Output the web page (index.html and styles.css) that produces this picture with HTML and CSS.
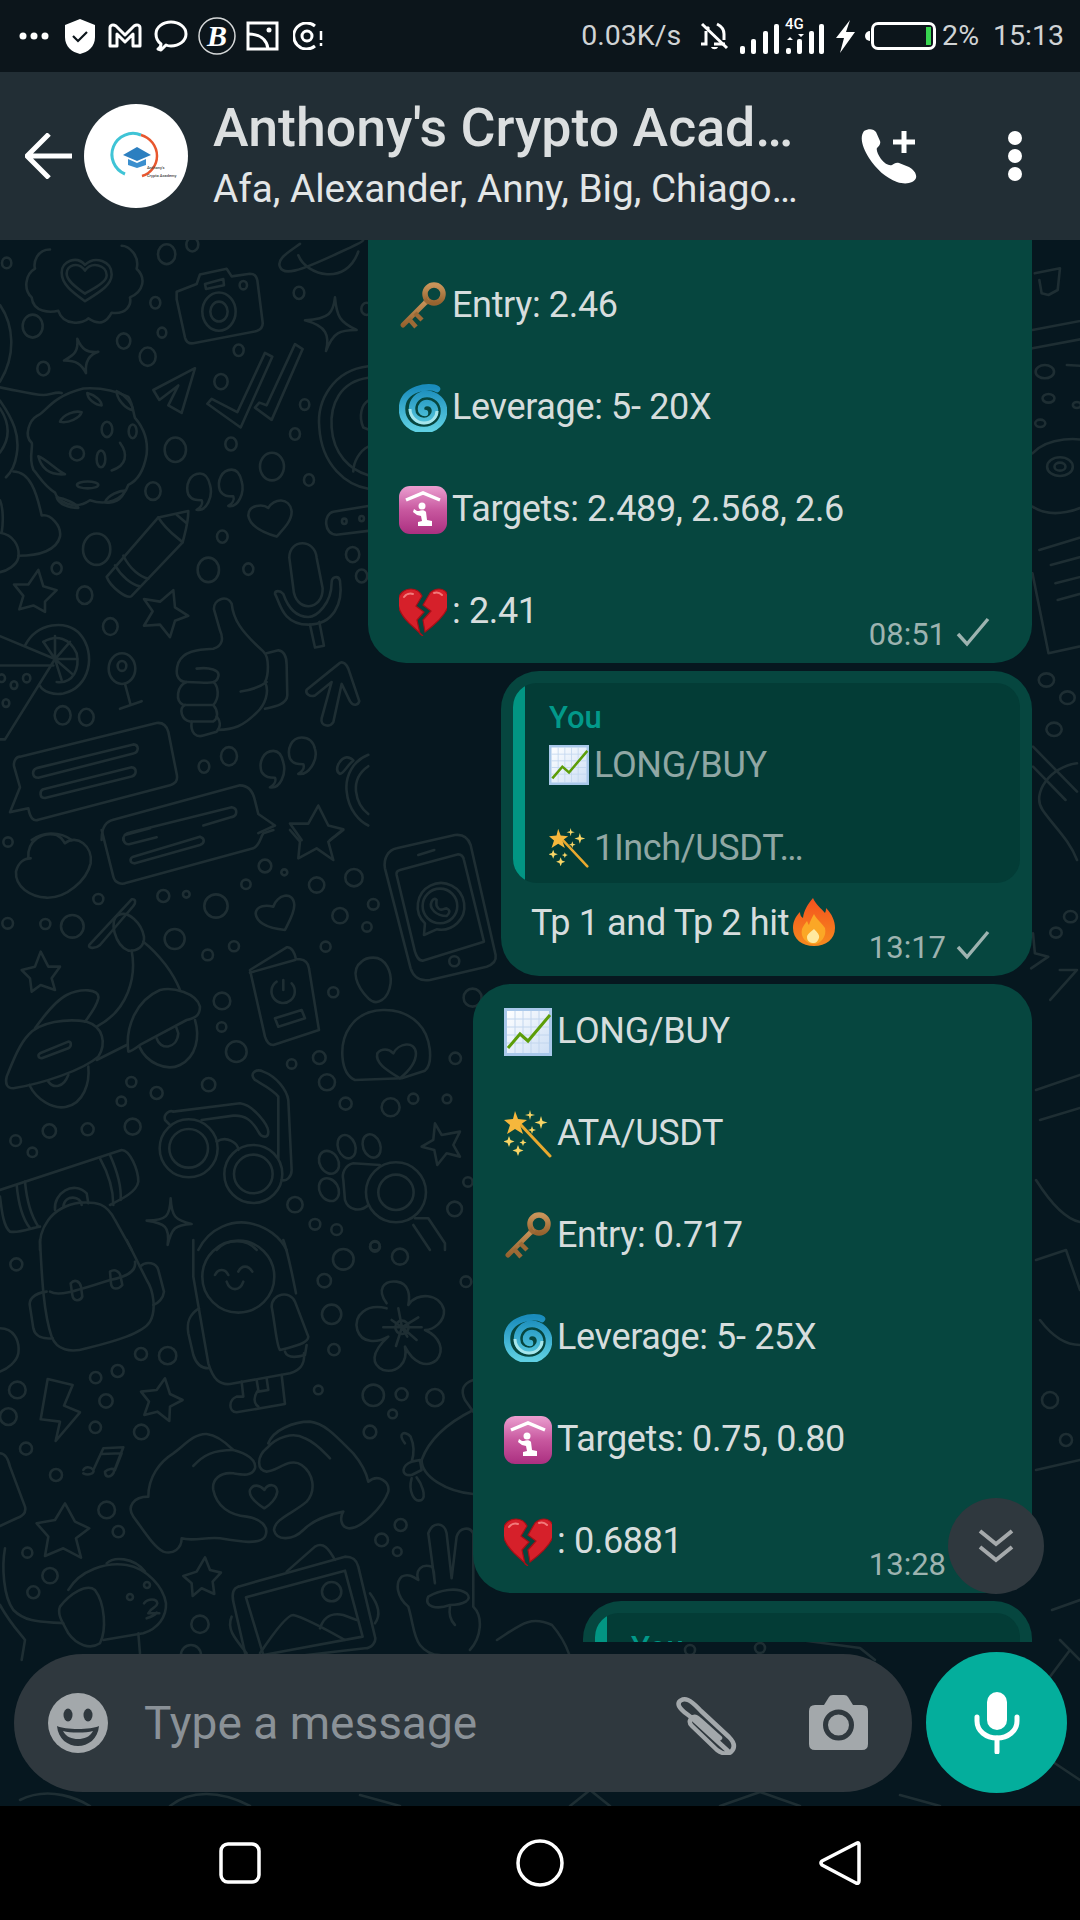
FILE: index.html
```html
<!DOCTYPE html>
<html lang="en">
<head>
<meta charset="utf-8">
<title>Anthony's Crypto Academy</title>
<link rel="stylesheet" href="styles.css">
</head>
<body>
<svg class="defs" width="0" height="0" aria-hidden="true">
  <defs>
    <linearGradient id="gWorship" x1="0" y1="0" x2="0" y2="1"><stop offset="0" stop-color="#eb9fd0"/><stop offset=".5" stop-color="#c8589f"/><stop offset="1" stop-color="#ab2f80"/></linearGradient>
    <linearGradient id="gSpiral" x1="0" y1="0" x2="0" y2="1"><stop offset="0" stop-color="#1a8cbc"/><stop offset="1" stop-color="#5fd0e2"/></linearGradient>
    <linearGradient id="gFire" x1="0" y1="0" x2="0" y2="1"><stop offset="0" stop-color="#f4511e"/><stop offset="1" stop-color="#f68a1e"/></linearGradient>
    <linearGradient id="gChart" x1="0" y1="0" x2="1" y2="1"><stop offset="0" stop-color="#fdfeff"/><stop offset="1" stop-color="#cfe0f5"/></linearGradient>
    <linearGradient id="gKey" x1="0" y1="0" x2="0" y2="1"><stop offset="0" stop-color="#c8945a"/><stop offset="1" stop-color="#96632f"/></linearGradient>
    <symbol id="e-key" viewBox="0 0 48 48">
      <circle cx="35" cy="12" r="9" fill="none" stroke="url(#gKey)" stroke-width="5.500"/>
      <path d="M28 19 4 43" fill="none" stroke="url(#gKey)" stroke-width="5" stroke-linecap="round"/>
      <path d="M10 37l7 8M16 31l7 7M26 17l4 4" fill="none" stroke="#9c6a36" stroke-width="4.500"/>
    </symbol>
    <symbol id="e-cyclone" viewBox="0 0 48 48">
      <path d="M38 5C32 1 3 3 3 25 3 38 13 46 25 46 37 46 45 37 45 27 45 17 37 10 28 10 19 10 13 17 13 25 13 32 18 37 25 37 31 37 36 32 36 27 36 22 32 19 28 19 24 19 22 22 22 25 22 28 24 29 26 29" fill="none" stroke="url(#gSpiral)" stroke-width="6.500" stroke-linecap="round"/>
      <path d="M11 25C11 33 18 39 25 39 33 39 38 33 38 27" fill="none" stroke="#a6e6ec" stroke-width="3"/>
    </symbol>
    <symbol id="e-worship" viewBox="0 0 48 48">
      <rect x="0" y="0" width="48" height="48" rx="11" fill="url(#gWorship)"/>
      <path d="M7 14 24 7 41 14" fill="none" stroke="#fff" stroke-width="3.500"/>
      <circle cx="23" cy="20" r="3.500" fill="#fff"/>
      <path d="M20 25c2-1 6-1 7 1l1 8 5 1v5H19v-4l4-1-1-5-4-1-4-3 1-3 3 2z" fill="#fff"/>
    </symbol>
    <symbol id="e-heart" viewBox="0 0 48 48">
      <path d="M24 48 10 35C3 28-1 21-1 14-1 6 5 1 12 1c5 0 9 3 11 7l-6 10 8 6-7 8 3 14zM26 44l-2-12 8-9-8-6 7-12c2-2 6-4 9-4 6 0 10 5 10 12 0 11-12 22-24 31z" fill="#d6202a" stroke="#a80e16" stroke-width="1.200"/>
      <path d="M5 9c2-3 6-4 9-3" fill="none" stroke="#f27a7a" stroke-width="2" stroke-linecap="round"/>
      <path d="M35 5c3-1 6 0 8 2" fill="none" stroke="#f27a7a" stroke-width="2" stroke-linecap="round"/>
    </symbol>
    <symbol id="e-chart" viewBox="0 0 48 48">
      <rect x="0" y="0" width="48" height="48" fill="#a9c8ea"/>
      <rect x="3" y="3" width="42" height="42" fill="url(#gChart)"/>
      <path d="M3 11h42M3 19h42M3 27h42M3 35h42M11 3v42M19 3v42M27 3v42M35 3v42" stroke="#c2d6ee" stroke-width="1"/>
      <path d="M4 40 16 26l8 7L46 7" fill="none" stroke="#5c9d08" stroke-width="3"/>
    </symbol>
    <symbol id="e-wand" viewBox="0 0 48 48">
      <path d="M16 14 46 46" stroke="#e9a92e" stroke-width="3" stroke-linecap="round"/>
      <path d="M11 1l3 8 9 1-7 5 3 9-8-5-8 5 3-9-6-5 9-1z" fill="#f6b73c"/>
      <path d="M26 0l1 4 4 1-4 1-1 4-1-4-4-1 4-1zM37 6l1.500 5 5 1.500-5 1.500-1.500 5-1.500-5-5-1.500 5-1.500zM28 16l1 3 3 1-3 1-1 3-1-3-3-1 3-1zM5 26l1.500 4 4 1.500-4 1.500L5 37l-1.500-4-4-1.500 4-1.500zM14 35l1.500 4 4 1.500-4 1.500-1.500 4-1.500-4-4-1.500 4-1.500zM19 29l1 2.500 2.500 1-2.500 1-1 2.500-1-2.500-2.500-1 2.500-1z" fill="#f8d566"/>
    </symbol>
    <symbol id="e-fire" viewBox="0 0 42 48">
      <path d="M20 0c3 7 8 10 12 15 1-2 1-4 1-5 6 6 9 13 9 20 0 11-9 18-21 18S0 41 0 30c0-7 3-12 7-16 0 3 1 5 3 6 1-8 5-14 10-20z" fill="url(#gFire)"/>
      <path d="M21 16c2 5 8 9 11 14 2 8-4 16-11 16-8 0-14-7-12-15 1-3 3-5 5-8 1 2 1 3 2 4 1-4 3-7 5-11z" fill="#fba726"/>
      <path d="M21 31c3 3 6 6 5 9-1 3-3 5-5 5-4 0-7-2-7-6 0-3 4-5 7-8z" fill="#ffe9a0"/>
    </symbol>
    <symbol id="i-check" viewBox="0 0 34 30">
      <path d="M2 17 11 27 32 2" fill="none" stroke="currentColor" stroke-width="3.400"/>
    </symbol>
  </defs>
</svg>

<div class="phone">
  <header class="statusbar">
    <div class="status-left">
      <svg class="st-dots" width="33" height="8" viewBox="0 0 33 8"><circle cx="4" cy="4" r="3.500"/><circle cx="15" cy="4" r="3.500"/><circle cx="26" cy="4" r="3.500"/></svg>
      <svg class="st-icon" width="32" height="35" viewBox="0 0 32 35"><path d="M16 0 31 6V18C31 28 24 33 16 35 8 33 1 28 1 18V6Z" fill="#fff"/><path d="M9 17l5 5 9-9" fill="none" stroke="#0c151b" stroke-width="2.200"/></svg>
      <svg class="st-icon" width="34" height="26" viewBox="0 0 34 26"><path d="M2 23V5C2 2 5 1 8 3L17 12 26 3C29 1 32 2 32 5V23H25V11L17 19 9 11V23Z" fill="none" stroke="#fff" stroke-width="3" stroke-linejoin="round"/></svg>
      <svg class="st-icon st-chat" width="34" height="32" viewBox="0 0 34 32"><path d="M7 24C3 21 2 18 2 14 2 7 9 2 17 2S32 7 32 14 25 26 17 26C15 26 14 26 12 25L7 30 4 29C6 28 7 26 7 24Z" fill="none" stroke="#fff" stroke-width="3" stroke-linejoin="round"/></svg>
      <svg class="st-icon st-brand" width="38" height="38" viewBox="0 0 38 38"><circle cx="19" cy="19" r="18" fill="none" stroke="#d5d7d8" stroke-width="1.500"/><text x="19" y="29" text-anchor="middle" class="st-b">B</text></svg>
      <svg class="st-icon st-image" width="33" height="30" viewBox="0 0 33 30"><rect x="2" y="2" width="29" height="26" fill="none" stroke="#fff" stroke-width="3"/><path d="M2 13C13 13 21 18 22 28" fill="none" stroke="#fff" stroke-width="3"/><circle cx="23" cy="9" r="2.500" fill="#fff"/></svg>
      <svg class="st-icon" width="30" height="28" viewBox="0 0 30 28"><path d="M22 4A13 13 0 1 0 22 24" fill="none" stroke="#fff" stroke-width="3"/><circle cx="14" cy="14" r="5" fill="none" stroke="#fff" stroke-width="3"/><path d="M28 9v9M28 21v3" stroke="#fff" stroke-width="2.500"/></svg>
    </div>
    <div class="status-right">
      <span class="st-text">0.03K/s</span>
      <svg class="st-bell" width="29" height="30" viewBox="0 0 29 30"><path d="M2 3 27 27" stroke="#fff" stroke-width="3"/><path d="M6 10V23H1M14 23H25M24 19V13C24 8 21 5 17 3M7 8 9 6" fill="none" stroke="#fff" stroke-width="3"/><path d="M11 26c1 3 6 3 7 0z" fill="#fff"/></svg>
      <svg class="st-signal" width="85" height="38" viewBox="0 0 85 38"><g fill="#fff"><rect x="0" y="30" width="5" height="8" rx="2"/><rect x="11" y="23" width="5" height="15" rx="2"/><rect x="23" y="15" width="5" height="23" rx="2"/><rect x="34" y="8" width="5" height="30" rx="2"/><rect x="46" y="32" width="5" height="6" rx="2"/><rect x="57" y="23" width="5" height="15" rx="2"/><rect x="69" y="15" width="5" height="23" rx="2"/><rect x="79" y="8" width="5" height="30" rx="2"/><path d="M47 24l3-3 3 3zM58 18l3 3 3-3z"/></g><text x="45" y="13" class="st-4g">4G</text></svg>
      <svg class="st-bolt" width="19" height="33" viewBox="0 0 19 33"><path d="M14 0 0 18H8L4 33 19 12H10Z" fill="#fff"/></svg>
      <div class="battery"><span class="battery-level"></span></div>
      <span class="st-text st-pct">2%</span>
      <span class="st-text st-time">15:13</span>
    </div>
  </header>

  <header class="appbar">
    <svg class="back" width="47" height="46" viewBox="0 0 47 46"><path d="M47 23H3M24 1 2 23 24 45" fill="none" stroke="#fff" stroke-width="5"/></svg>
    <div class="avatar">
      <svg width="104" height="104" viewBox="0 0 104 104"><path d="M41 70A21 21 0 0 1 57 31" fill="none" stroke="#3fc4d6" stroke-width="3"/><path d="M57 31A22 22 0 0 1 73 52 21 21 0 0 1 58 72" fill="none" stroke="#e8572e" stroke-width="2.500"/><path d="M39 51 53 43 67 51 53 57Z" fill="#2c7fc0"/><path d="M44 55V61L53 64 62 61V55L53 59Z" fill="#3b8fce"/><text x="63" y="65" class="logo-text">Anthony's</text><text x="63" y="73" class="logo-text">Crypto Academy</text></svg>
    </div>
    <div class="title-block">
      <div class="title">Anthony's Crypto Acad…</div>
      <div class="subtitle">Afa, Alexander, Anny, Big, Chiago…</div>
    </div>
    <svg class="add-call" width="56" height="56" viewBox="0 0 56 56"><path d="M3 3C8 0 13 1 15 4L19 13C20 16 18 18 16 20 15 22 17 27 20 31 24 36 28 38 31 37 33 36 35 34 38 35L48 39C53 42 56 46 55 50 53 55 45 57 36 54 25 50 15 41 8 30 2 20-2 10 3 3Z" fill="#fff"/><path d="M43 3V25M32 14H54" stroke="#fff" stroke-width="5"/></svg>
    <svg class="menu" width="16" height="50" viewBox="0 0 16 50"><circle cx="8" cy="7" r="7"/><circle cx="8" cy="25" r="7"/><circle cx="8" cy="43" r="7"/></svg>
  </header>

  <main class="chat">
    <svg class="wall" width="1080" height="1566" viewBox="0 240 1080 1566" aria-hidden="true">
      <g transform="translate(0 240) scale(.3333 .3827)">
        <circle cx="20" cy="60" r="14"/><circle cx="500" cy="37" r="26"/><circle cx="577" cy="12" r="18"/><circle cx="466" cy="164" r="15"/><circle cx="98" cy="225" r="30"/><circle cx="371" cy="264" r="20"/><circle cx="486" cy="242" r="13"/><circle cx="443" cy="305" r="24"/><circle cx="130" cy="336" r="18"/><circle cx="716" cy="288" r="15"/><circle cx="663" cy="370" r="20"/><circle cx="897" cy="138" r="16"/><circle cx="914" cy="430" r="14"/><circle cx="885" cy="507" r="15"/><circle cx="693" cy="533" r="17"/><circle cx="526" cy="548" r="32"/><circle cx="816" cy="592" r="36"/><circle cx="459" cy="656" r="23"/><circle cx="927" cy="627" r="15"/><circle cx="667" cy="775" r="16"/><circle cx="290" cy="808" r="41"/><circle cx="625" cy="862" r="32"/><circle cx="745" cy="860" r="15"/><circle cx="170" cy="858" r="15"/><circle cx="254" cy="928" r="23"/><circle cx="331" cy="1010" r="22"/><circle cx="1058" cy="822" r="20"/><circle cx="1085" cy="878" r="17"/><circle cx="188" cy="1242" r="24"/><circle cx="259" cy="1247" r="22"/><circle cx="612" cy="1376" r="16"/><circle cx="687" cy="1349" r="24"/><circle cx="1100" cy="180" r="16"/>
        <path d="M150 25C110 25 100 60 105 75 75 90 70 130 95 150 100 190 150 190 175 185 190 225 250 220 265 205 300 225 320 215 335 190 380 195 395 170 390 150 430 135 440 100 410 75 420 40 385 15 365 15"/>
        <path d="M255 160C215 135 185 115 185 85 185 55 230 40 255 65 285 40 335 55 335 90 335 120 290 140 255 160Z"/><path d="M255 140C225 122 200 105 200 88 200 65 235 55 255 80 275 55 320 65 320 92 320 110 285 125 255 140Z"/>
        <path d="M530 135 590 115 600 90 680 75 695 95 750 88Q768 88 772 105L788 215Q790 232 770 238L580 270Q560 272 555 255L530 155Z"/><circle cx="657" cy="187" r="50"/><circle cx="657" cy="187" r="26"/><path d="M615 115 670 102 672 118 618 128Z"/><circle cx="730" cy="118" r="11"/>
        <path d="M900 10C860 35 830 50 840 70 850 95 900 80 1000 40 1050 20 1090 5 1090 0"/><path d="M895 40C920 95 1040 120 1075 30"/>
        <path d="M1005 150C1000 190 990 205 915 210 980 225 990 250 978 290 1000 240 1020 235 1070 235 1020 215 1010 200 1005 150Z"/>
        <path d="M232 258C235 290 225 300 192 315 230 315 245 325 258 348 255 320 265 300 295 292 260 295 245 285 232 258Z"/>
        <path d="M585 335 460 392 478 418 535 380 505 432 545 452Z"/>
        <path d="M622 428 635 415 712 450 795 295 817 305 722 490Z"/><path d="M765 438 778 425 800 432 885 272 908 285 815 470Z"/>
        <path d="M110 460C140 450 150 410 250 388 300 385 350 395 385 410 400 430 400 455 405 465 430 490 445 520 440 560 430 610 410 630 385 640 370 680 320 695 270 680 220 710 170 680 165 660 130 640 120 620 100 600 85 570 100 540 95 530 70 510 90 470 110 460Z"/>
        <path d="M180 475C190 455 225 445 245 450 240 465 205 480 180 475Z"/><path d="M262 400C285 405 305 420 305 432 285 432 262 415 262 400Z"/><path d="M350 395C375 405 400 430 398 445 375 440 350 415 350 395Z"/><ellipse cx="321" cy="495" rx="16" ry="20"/><ellipse cx="398" cy="500" rx="12" ry="18"/><ellipse cx="231" cy="558" rx="21" ry="18"/><ellipse cx="303" cy="572" rx="13" ry="22"/><path d="M360 530C385 560 380 590 335 602"/><path d="M115 565C135 570 175 605 195 612 150 615 125 600 115 565Z"/><ellipse cx="263" cy="640" rx="32" ry="9"/><path d="M170 672C195 675 230 690 235 700 205 700 175 690 170 672Z"/><path d="M315 685C325 665 360 655 375 655 365 680 340 690 315 685Z"/>
        <path d="M0 385C60 395 100 405 130 405 150 405 170 395 185 400"/><path d="M0 420C40 470 60 510 50 560 45 590 30 610 18 620"/><path d="M40 605C90 605 110 660 125 720 150 715 185 745 180 775 170 810 120 825 55 825"/><path d="M0 765C40 770 60 800 55 830 50 850 20 865 0 868"/><path d="M0 170C40 220 50 300 0 370"/><path d="M0 680C10 700 10 740 5 765"/><path d="M0 440C30 480 30 520 0 555"/>
        <path d="M600 610C570 610 555 640 565 665 575 680 590 680 605 680 610 690 600 700 590 705 620 710 640 670 630 640 625 620 615 610 600 610Z"/><path d="M695 600C665 600 650 630 660 655 670 670 685 670 700 670 705 680 695 690 685 695 715 700 735 660 725 630 720 610 710 600 695 600Z"/>
        <path d="M820 1335C790 1335 775 1365 785 1390 795 1405 810 1405 825 1405 830 1415 820 1425 810 1430 840 1435 860 1395 850 1365 845 1345 835 1335 820 1335Z"/><path d="M905 1300C875 1300 860 1330 870 1355 880 1370 895 1370 910 1370 915 1380 905 1390 895 1395 925 1400 955 1360 945 1330 940 1310 925 1300 905 1300Z"/>
        <path d="M830 775C790 765 750 750 745 720 745 690 790 690 805 700 820 675 870 670 875 710 875 735 850 755 830 775Z"/>
        <path d="M475 725 565 708C565 740 555 765 548 790L395 930C380 940 330 905 320 880Z"/><path d="M475 725C500 760 530 775 548 790"/><path d="M370 825C390 860 420 880 445 885"/><path d="M345 850C365 880 395 900 420 905"/><path d="M530 718 560 740"/>
        <path d="M868 830C868 780 945 780 950 830L968 910C970 970 885 975 880 910Z"/><path d="M825 925C840 945 845 1005 925 1005 1000 1005 1030 950 1020 890 1015 875 995 880 995 895 995 950 950 985 925 985 880 985 860 950 850 925 840 915 825 915 825 925Z"/><path d="M930 1005 945 1065 972 1060 958 998"/>
        <path d="M1105 330C1000 340 950 420 958 490 965 590 1040 640 1105 650"/><path d="M1105 360C1020 370 990 430 995 490 1000 560 1050 600 1105 615"/><path d="M1105 420C1085 430 1075 460 1090 490L1105 495"/><path d="M1105 540C1080 550 1060 580 1060 605"/>
        <path d="M1105 695 1000 710C970 715 970 770 1010 770L1105 760"/><circle cx="1033" cy="735" r="7"/><circle cx="1085" cy="728" r="7"/>
        <path d="M115 862 130 905 170 915 135 945 135 972 100 955 58 965 70 930 42 900 85 900Z"/>
        <path d="M520 915 525 960 565 982 525 995 510 1038 480 1005 432 1008 458 970 432 938 480 945Z"/>
        <path d="M0 1035 165 1095 15 1305H0"/><path d="M0 1112H160"/><path d="M75 1060C110 1000 200 990 240 1030 290 1080 270 1170 190 1185 160 1190 130 1180 120 1165"/><path d="M130 1050C170 1030 210 1040 230 1080 240 1120 220 1160 170 1155"/><path d="M165 1095 130 1050M165 1095 165 1035M165 1095 210 1050M165 1095H232M165 1095 218 1135M165 1095 185 1150"/><circle cx="5" cy="1145" r="10"/><circle cx="42" cy="1163" r="10"/><circle cx="80" cy="1145" r="11"/><circle cx="18" cy="1210" r="10"/>
        <circle cx="366" cy="1120" r="40"/><circle cx="366" cy="1113" r="13"/><path d="M375 1160 392 1215M360 1225 425 1205"/>
        <path d="M590 1120C630 1115 660 1125 655 1140 650 1165 620 1155 560 1155 530 1155 525 1130 535 1105 550 1075 590 1070 640 1068 670 1060 670 1040 660 1020L642 965C640 940 680 925 695 950 700 990 720 1020 790 1075 810 1090 805 1140 795 1155 810 1180 795 1215 770 1235 730 1270 700 1280 655 1280"/><path d="M560 1155C530 1165 525 1205 550 1215L640 1215C660 1195 655 1165 640 1155"/><path d="M555 1215C535 1225 545 1255 570 1258L640 1258C655 1250 655 1230 640 1215"/><path d="M575 1258C570 1290 590 1300 610 1295L650 1285C665 1270 660 1255 650 1245"/><path d="M800 1080 835 1072C855 1075 860 1090 860 1110L862 1190C860 1215 820 1220 795 1225"/><path d="M722 1180C760 1175 785 1165 800 1155"/>
        <path d="M920 1175 1020 1105C1030 1100 1040 1110 1045 1120L1078 1205C1075 1215 1060 1220 1050 1205L1025 1160 1000 1260C990 1275 960 1270 965 1250L995 1155 945 1190C930 1195 915 1185 920 1175Z"/>
        <path d="M60 1350 470 1262C490 1260 500 1270 505 1285L530 1395C535 1415 525 1420 510 1425L115 1515C100 1520 90 1510 85 1485L30 1495 60 1430 42 1375C40 1360 50 1350 60 1350Z"/><path d="M110 1380 400 1318C420 1320 415 1340 400 1342L115 1405C95 1405 95 1385 110 1380Z"/><path d="M130 1435 395 1378C412 1380 410 1398 395 1402L135 1458C118 1458 118 1440 130 1435Z"/>
        <path d="M305 1568C305 1530 320 1520 340 1515L720 1425C750 1425 760 1445 765 1465L775 1500 825 1530 775 1550"/><path d="M370 1568C370 1555 375 1550 390 1548L695 1482C715 1485 712 1505 695 1508L610 1530"/>
        <path d="M955 1478 985 1530 1030 1540 990 1568M955 1478 925 1525 870 1525 905 1568"/>
        <path d="M1105 1345C1060 1360 1035 1400 1040 1440 1045 1490 1080 1520 1105 1530"/><path d="M1105 1375C1080 1390 1065 1410 1068 1440 1072 1470 1090 1490 1105 1500"/><path d="M1015 1370C1030 1345 1050 1350 1060 1360 1040 1375 1030 1395 1020 1395 1010 1390 1010 1380 1015 1370Z"/>
        <path d="M95 1568C130 1545 180 1545 215 1568"/>
      </g>
      <g transform="translate(0 830) scale(.3333)">
        <circle cx="24" cy="36" r="14"/><circle cx="295" cy="207" r="15"/><circle cx="23" cy="280" r="16"/><circle cx="136" cy="282" r="15"/><circle cx="217" cy="289" r="34"/><circle cx="490" cy="198" r="18"/><circle cx="559" cy="193" r="10"/><circle cx="648" cy="228" r="35"/><circle cx="524" cy="327" r="30"/><circle cx="623" cy="375" r="16"/><circle cx="702" cy="349" r="15"/><circle cx="738" cy="163" r="14"/><circle cx="795" cy="108" r="19"/><circle cx="853" cy="127" r="9"/><circle cx="950" cy="165" r="23"/><circle cx="1062" cy="143" r="26"/><circle cx="1120" cy="223" r="16"/><circle cx="1020" cy="257" r="23"/><circle cx="1101" cy="291" r="14"/><circle cx="977" cy="350" r="15"/><circle cx="1000" cy="487" r="15"/><circle cx="666" cy="513" r="25"/><circle cx="665" cy="591" r="14"/><circle cx="709" cy="665" r="31"/><circle cx="875" cy="702" r="14"/><circle cx="958" cy="683" r="19"/><circle cx="981" cy="757" r="24"/><circle cx="626" cy="764" r="20"/><circle cx="394" cy="756" r="15"/><circle cx="470" cy="789" r="18"/><circle cx="364" cy="814" r="14"/><circle cx="398" cy="890" r="24"/><circle cx="263" cy="898" r="18"/><circle cx="148" cy="903" r="20"/><circle cx="47" cy="932" r="16"/><circle cx="97" cy="967" r="14"/><circle cx="1037" cy="821" r="18"/><circle cx="1172" cy="832" r="27"/><circle cx="1240" cy="806" r="15"/><circle cx="1341" cy="807" r="13"/><circle cx="1366" cy="685" r="17"/><circle cx="1418" cy="503" r="27"/><circle cx="1404" cy="1056" r="14"/><circle cx="1364" cy="1137" r="22"/><circle cx="885" cy="1124" r="23"/><circle cx="945" cy="1183" r="16"/><circle cx="1010" cy="1199" r="16"/><circle cx="1125" cy="1247" r="14"/>
        <path d="M85 85C80 30 130 5 170 15 190 25 190 35 195 40 230 10 280 50 272 100 260 150 200 205 140 203 90 200 45 170 48 125 55 95 75 85 92 85"/>
        <path d="M305 0 340 140C345 160 365 165 380 158L760 55C780 45 780 25 790 10L820 0"/><path d="M375 15 450 -5M400 80 600 20C615 25 615 40 600 45L405 100C388 100 388 85 400 80Z"/><path d="M370 25C370 38 380 45 390 42L470 22"/>
        <path d="M870 0 900 35 895 85 950 55 1000 90 985 35 1030 0"/>
        <path d="M1190 55 1365 15C1390 12 1405 25 1412 45L1487 375C1490 395 1475 405 1460 410L1290 450C1260 455 1240 440 1232 415L1155 115C1150 85 1165 60 1190 55Z"/><path d="M1200 120 1375 73C1385 73 1390 80 1392 90L1452 335 1268 392C1255 392 1250 380 1245 365L1190 135C1188 125 1192 122 1200 120Z"/><path d="M1255 75 1303 60"/><circle cx="1363" cy="394" r="15"/><path d="M1272 315 1275 280A70 70 0 1 1 1310 298Z"/><circle cx="1320" cy="228" r="52"/><path d="M1295 215C1285 235 1310 258 1340 258 1350 250 1352 240 1340 235 1330 235 1325 245 1315 235 1305 225 1310 215 1310 210 1305 205 1300 205 1295 215Z"/>
        <path d="M855 300C810 295 770 280 767 250 770 225 800 225 820 230 830 195 880 180 883 225 883 250 865 280 855 300Z"/>
        <path d="M750 420 860 352C875 350 885 370 888 388L900 388C915 390 925 400 927 415L957 600 820 645C805 645 798 630 795 620Z"/><path d="M750 428 885 390"/><path d="M830 455A35 35 0 1 0 875 460"/><path d="M850 450V480"/><path d="M825 565 905 540 915 565 835 590Z"/>
        <path d="M1120 383C1160 383 1175 430 1172 460 1165 510 1130 530 1105 505 1070 470 1050 420 1085 395 1095 385 1110 383 1120 383Z"/>
        <path d="M1065 750C1020 730 1015 640 1050 590 1095 525 1200 525 1255 580 1295 620 1300 700 1275 722L1205 745 1065 750"/><path d="M1200 745C1160 720 1125 700 1132 670 1145 655 1165 655 1180 670 1195 640 1245 630 1248 670 1248 700 1225 725 1200 745Z"/>
        <path d="M122 365 145 410 180 410 155 445 165 480 122 465 95 485 90 445 65 420 105 410Z"/>
        <path d="M268 345 395 208C408 205 408 220 400 228L300 345C285 358 262 355 268 345Z"/><path d="M355 255C385 240 425 280 432 320 435 350 410 365 385 362 345 345 325 270 355 255Z"/><path d="M395 362C410 440 385 540 290 590"/><path d="M430 335C480 375 520 430 540 480"/><path d="M105 595C130 560 170 510 200 495 240 475 300 475 295 505 290 530 270 555 255 575"/><path d="M20 740C40 690 60 640 85 615 120 575 200 565 260 575 310 590 320 640 295 680 250 720 130 760 40 775 20 775 15 760 20 740Z"/><path d="M120 670 205 635C215 635 215 650 205 655L125 685C115 685 112 675 120 670Z"/><path d="M88 765C110 810 160 840 200 830 250 820 270 760 265 710"/><path d="M145 755C160 775 190 775 205 735"/><path d="M385 665C375 590 410 510 480 480 520 470 590 490 600 530 600 560 580 565 560 570L420 645C400 660 390 665 385 665Z"/><path d="M418 650C440 700 500 725 540 705 590 680 600 620 585 570"/><path d="M470 625C480 660 530 660 535 610L528 590"/><path d="M290 690 380 645"/>
        <circle cx="566" cy="955" r="87"/><circle cx="566" cy="955" r="58"/><circle cx="760" cy="1032" r="87"/><circle cx="760" cy="1032" r="58"/><path d="M650 935C680 915 715 940 715 960"/><path d="M520 845 720 820C760 825 805 885 805 905 805 925 785 925 775 905 755 870 735 855 700 857L605 870"/><path d="M520 845C510 840 490 850 495 870L510 885"/><path d="M835 985V800C820 780 790 765 765 750 745 730 770 715 790 725 830 740 860 780 865 810L875 1020C875 1040 860 1055 845 1050"/>
        <ellipse cx="1040" cy="950" rx="26" ry="36" transform="rotate(-20 1040 950)"/><ellipse cx="1115" cy="948" rx="26" ry="36" transform="rotate(-20 1115 948)"/><ellipse cx="987" cy="997" rx="28" ry="36" transform="rotate(-30 987 997)"/><ellipse cx="987" cy="1079" rx="28" ry="36" transform="rotate(-30 987 1079)"/><path d="M1140 1005 1060 1000C1035 1005 1025 1030 1030 1050L1035 1110C1045 1145 1085 1145 1105 1125"/><circle cx="1188" cy="1087" r="90"/><circle cx="1188" cy="1087" r="53"/><path d="M1245 1165 1285 1165 1335 1240V1260M1240 1185 1290 1260"/>
        <path d="M1305 880 1325 915 1380 905 1360 945 1380 980 1340 970 1312 1005 1303 960 1265 950 1300 930Z"/>
        <path d="M0 1080 365 960C390 960 415 1020 415 1055 410 1085 370 1105 330 1125"/><path d="M0 1100C5 1140 10 1190 30 1205 60 1210 90 1195 120 1190"/><path d="M50 1065C55 1120 70 1170 90 1195M75 1055C80 1110 95 1160 115 1190M300 985C325 1030 340 1080 340 1125M330 975C350 1020 365 1070 362 1110"/><path d="M165 1140C160 1090 220 1050 260 1090L265 1120"/><path d="M190 1130C195 1090 245 1100 245 1125"/>
        <path d="M120 1260C115 1200 150 1130 240 1118 290 1115 320 1120 345 1170L395 1260"/>
        <path d="M512 1105C510 1160 500 1170 440 1172 495 1180 510 1190 503 1245 515 1195 525 1185 575 1182 525 1170 515 1160 512 1105Z"/>
        <path d="M595 1260C630 1190 700 1170 750 1180 800 1190 840 1220 860 1260"/><path d="M650 1260C680 1225 740 1225 770 1260"/>
      </g>
      <g transform="translate(0 1240) scale(.3333)">
        <circle cx="49" cy="73" r="18"/><circle cx="423" cy="342" r="18"/><circle cx="503" cy="347" r="26"/><circle cx="1030" cy="58" r="31"/><circle cx="1125" cy="20" r="15"/><circle cx="1200" cy="50" r="24"/><circle cx="973" cy="122" r="20"/><circle cx="1398" cy="125" r="16"/><circle cx="995" cy="223" r="29"/><circle cx="1002" cy="329" r="17"/><circle cx="955" cy="450" r="13"/><circle cx="1120" cy="466" r="32"/><circle cx="1205" cy="463" r="18"/><circle cx="1305" cy="473" r="26"/><circle cx="1178" cy="522" r="13"/><circle cx="1110" cy="576" r="19"/><circle cx="52" cy="450" r="25"/><circle cx="25" cy="530" r="25"/><circle cx="287" cy="413" r="17"/><circle cx="353" cy="393" r="18"/><circle cx="318" cy="483" r="20"/><circle cx="286" cy="562" r="17"/><circle cx="424" cy="576" r="22"/><circle cx="78" cy="626" r="18"/><circle cx="168" cy="705" r="18"/><circle cx="320" cy="810" r="25"/><circle cx="355" cy="875" r="17"/><circle cx="82" cy="938" r="15"/><circle cx="150" cy="1007" r="23"/><circle cx="100" cy="1057" r="18"/><circle cx="600" cy="1153" r="26"/><circle cx="1202" cy="855" r="18"/><circle cx="1145" cy="900" r="19"/><circle cx="1192" cy="935" r="13"/><circle cx="573" cy="1245" r="30"/><circle cx="441" cy="1035" r="9"/><circle cx="390" cy="1071" r="9"/><circle cx="1206" cy="262" r="20"/>
        <path d="M120 0C125 100 130 220 155 290 170 330 210 340 260 325 340 305 430 280 450 245 470 210 460 150 440 120 420 80 400 40 380 0"/><path d="M150 155C175 170 220 155 330 120 380 110 410 95 405 65"/><path d="M140 155C100 160 85 180 90 200L100 265C105 290 130 298 158 295"/><path d="M420 80C440 60 470 70 475 90L492 155C490 175 475 190 460 195"/><path d="M212 130C225 115 240 125 243 140L247 170C240 185 220 185 217 165Z"/><path d="M330 95C345 85 360 95 362 110L367 135C355 150 335 150 333 130Z"/>
        <path d="M0 265C40 265 60 300 55 340 50 365 25 385 0 395"/>
        <path d="M580 0V110L625 370C640 420 660 435 690 432L870 400C905 390 915 370 912 340"/><circle cx="715" cy="110" r="108"/><path d="M850 0C865 40 880 120 888 160"/><path d="M815 200C815 160 870 150 885 185L925 290C925 310 880 320 840 330 830 320 825 250 815 200Z"/><path d="M855 335C860 350 880 355 915 345L920 315"/><path d="M597 205C565 225 560 250 565 280L580 345C590 375 605 385 625 385"/><path d="M725 425 730 470H710C685 480 685 515 710 517L855 492 845 405"/><path d="M770 420 775 450C760 470 760 490 775 500M800 415 805 450 775 455"/><path d="M645 105C655 85 675 85 685 105M715 95C725 75 745 75 757 95M680 125C690 155 720 155 730 125"/>
        <path d="M1160 190C1130 150 1150 120 1190 125 1230 130 1230 170 1225 195 1250 155 1320 160 1332 210 1335 245 1300 270 1275 270 1320 290 1335 330 1310 360 1280 385 1240 370 1215 320 1225 370 1190 400 1150 390 1115 375 1110 340 1165 290 1130 310 1085 310 1072 270 1060 225 1100 190 1160 205"/><path d="M1206 262 1195 205M1206 262 1255 232M1206 262H1265M1206 262 1250 300M1206 262 1222 290M1206 262 1188 318M1206 262H1150M1206 262 1175 240"/>
        <path d="M143 417 218 435 192 497 240 517 167 603 180 545 122 538Z"/>
        <path d="M495 415 510 462 548 480 510 500 508 543 472 515 433 525 447 485 423 455 470 450Z"/>
        <path d="M250 690C255 680 270 678 280 690L310 625 370 622 340 700C330 715 315 712 315 695 325 685 340 685 345 690L365 640 305 642M280 690C285 700 265 708 250 700"/>
        <path d="M445 770C445 710 480 665 520 640 550 620 580 580 620 582 650 585 680 610 700 630 740 640 770 660 765 685 755 710 730 705 700 700 660 695 635 720 640 750 650 800 690 825 740 830 780 835 810 860 795 890 780 915 720 905 660 895 620 890 580 905 545 895 545 925 520 945 490 935 460 920 430 870 400 830 380 800 400 770 445 770Z"/><path d="M580 678C610 645 640 630 700 630"/>
        <path d="M805 610C820 570 880 545 930 545 975 550 1010 590 1060 640 1085 670 1100 700 1105 725 1135 700 1170 725 1165 755 1150 800 1080 870 1045 865 1020 860 1020 830 1030 815 980 825 940 840 910 870 880 900 830 905 822 870 825 835 880 820 920 785 950 750 940 700 905 675 870 650 830 695 800 695 770 690 770 650 800 625 830 590 880 575 915 595 950 610 970 635 990 655"/>
        <path d="M793 805C770 790 745 770 750 750 760 730 780 735 793 750 805 730 830 730 832 755 830 775 810 795 793 805Z"/>
        <path d="M195 790 225 845 268 865 228 895 243 953 190 925 135 948 145 890 110 850 165 840Z"/>
        <path d="M615 952 630 990 663 998 638 1025 643 1062 605 1045 578 1068 575 1030 550 1008 590 995Z"/>
        <path d="M205 1050C240 990 320 965 380 975 440 985 490 1040 498 1090 500 1130 475 1165 430 1180L310 1200"/><path d="M320 970C340 950 400 950 435 995"/><path d="M180 1100C210 1060 260 1030 285 1050 315 1090 320 1170 300 1210 270 1230 230 1215 205 1180 190 1150 170 1125 180 1100Z"/><path d="M432 1090C445 1075 470 1075 472 1090 470 1105 455 1100 445 1120H478M440 1135C455 1130 465 1125 470 1118"/><path d="M415 1180 420 1240"/>
        <path d="M15 925C5 980 10 1070 40 1110 80 1150 130 1145 190 1150"/><path d="M0 1095C30 1150 60 1180 75 1200L65 1260"/><path d="M0 640C15 640 25 660 30 680L75 800C80 820 65 830 50 835L0 858"/>
        <path d="M1225 1100C1190 1070 1185 1030 1205 1010 1225 1000 1240 1010 1255 1020 1245 990 1265 970 1295 980 1305 990 1300 1000 1305 1030L1285 880C1300 840 1335 850 1340 880L1355 1015 1370 890C1380 860 1410 860 1420 880V1100C1450 1130 1445 1190 1410 1230M1225 1100C1240 1150 1240 1190 1260 1215 1280 1240 1300 1245 1320 1245"/><path d="M1285 1070C1320 1050 1370 1040 1400 1060 1420 1080 1390 1095 1350 1095 1310 1110 1270 1100 1285 1070Z"/><path d="M1350 1100C1345 1130 1355 1145 1365 1155"/>
        <path d="M715 1040 1035 950C1060 950 1070 960 1075 980L1125 1190C1130 1205 1115 1225 1095 1225L790 1260"/><path d="M715 1040C700 1045 695 1060 700 1085L740 1260"/><path d="M738 1072 1035 992 1088 1190 790 1245Z"/><path d="M780 1240C820 1180 860 1125 880 1125 920 1135 990 1175 1035 1200"/><path d="M960 1165C975 1120 1005 1120 1030 1125L1070 1140"/><circle cx="995" cy="1055" r="29"/><path d="M860 995 945 920C970 905 985 925 1005 960"/><path d="M695 1130C680 1165 700 1190 740 1240"/><path d="M1110 1060C1140 1100 1140 1130 1125 1150"/>
        <path d="M1265 660C1290 590 1360 540 1420 510M1265 660C1265 710 1340 755 1420 762"/><path d="M1215 610C1190 580 1215 570 1232 590 1245 620 1240 650 1235 665 1205 675 1200 710 1235 705L1265 690 1260 660 1235 665"/><path d="M1235 715C1225 750 1240 790 1265 780 1280 770 1265 730 1250 712"/>
        <path d="M1420 420C1390 430 1380 450 1395 480L1420 515"/>
      </g>
      <g transform="translate(360 240) scale(.459 .3333)">
        <path d="M1470 100 1525 85 1520 150 1500 165 1485 160 1480 120"/><circle cx="1492" cy="395" r="20"/><circle cx="1500" cy="475" r="13"/><circle cx="1482" cy="550" r="11"/><circle cx="1562" cy="495" r="9"/><path d="M1465 640C1500 590 1568 590 1600 610M1465 800C1510 840 1570 810 1600 780"/><circle cx="1525" cy="680" r="28"/><circle cx="1525" cy="680" r="12"/><path d="M1465 270 1600 235M1465 325 1600 290M1540 375 1600 380"/><path d="M1480 930 1600 880M1465 1000 1500 1240 1600 1210M1505 975 1600 940M1515 1030 1600 1000M1520 1080 1600 1050"/>
      </g>
      <g transform="translate(480 660) scale(.3827 .3333)">
        <circle cx="1480" cy="60" r="20"/><circle cx="1535" cy="113" r="19"/><circle cx="1500" cy="208" r="20"/><path d="M1445 260 1560 395M1445 320 1530 420M1560 310C1490 320 1440 400 1470 450 1500 500 1540 540 1560 600"/><circle cx="1543" cy="770" r="17"/><circle cx="1505" cy="818" r="15"/><path d="M1445 820 1450 880 1485 890 1440 925M1515 930 1560 930 1490 1020"/>
      </g>
      <g>
        <path d="M1036 1090 1080 1075M1040 1120 1080 1108M1036 1180C1055 1210 1070 1220 1080 1222"/><path d="M1036 1260 1066 1250 1080 1290M1040 1320C1055 1340 1070 1345 1080 1345"/><circle cx="1050" cy="1400" r="8"/><circle cx="1066" cy="1440" r="6"/><path d="M1036 1470 1080 1460"/><path d="M1052 1610 1080 1600M1060 1640 1080 1660"/>
        <path d="M497 1640C520 1625 530 1615 552 1625 565 1640 575 1660 575 1690"/><circle cx="600" cy="1628" r="8"/><circle cx="690" cy="1650" r="5"/><circle cx="760" cy="1648" r="5"/><path d="M800 1640 860 1648 875 1660"/>
        <path d="M1070 1650 1040 1690M1050 1760 1080 1780M20 1800C50 1785 80 1800 90 1806M170 1806C190 1790 220 1790 250 1806M360 1795 400 1806M570 1806 590 1790 610 1806M720 1806 760 1792 800 1806M900 1795 940 1806"/>
      </g>
    </svg>

    <section class="messages">
      <article class="bubble bubble-cut">
        <div class="line"><svg class="emoji"><use href="#e-key"/></svg><span>Entry: 2.46</span></div>
        <div class="line"><svg class="emoji"><use href="#e-cyclone"/></svg><span>Leverage: 5- 20X</span></div>
        <div class="line"><svg class="emoji"><use href="#e-worship"/></svg><span>Targets: 2.489, 2.568, 2.6</span></div>
        <div class="line"><svg class="emoji"><use href="#e-heart"/></svg><span>: 2.41</span></div>
        <div class="meta"><span>08:51</span><svg class="check"><use href="#i-check"/></svg></div>
      </article>

      <article class="bubble bubble-reply bubble-tp">
        <div class="reply">
          <div class="reply-name">You</div>
          <div class="reply-line"><svg class="emoji-sm"><use href="#e-chart"/></svg><span>LONG/BUY</span></div>
          <div class="reply-line reply-gap"><svg class="emoji-sm"><use href="#e-wand"/></svg><span>1Inch/USDT…</span></div>
        </div>
        <div class="reply-text"><span>Tp 1 and Tp 2 hit</span><svg class="emoji-fire"><use href="#e-fire"/></svg></div>
        <div class="meta"><span>13:17</span><svg class="check"><use href="#i-check"/></svg></div>
      </article>

      <article class="bubble bubble-ata">
        <div class="line"><svg class="emoji"><use href="#e-chart"/></svg><span>LONG/BUY</span></div>
        <div class="line"><svg class="emoji"><use href="#e-wand"/></svg><span>ATA/USDT</span></div>
        <div class="line"><svg class="emoji"><use href="#e-key"/></svg><span>Entry: 0.717</span></div>
        <div class="line"><svg class="emoji"><use href="#e-cyclone"/></svg><span>Leverage: 5- 25X</span></div>
        <div class="line"><svg class="emoji"><use href="#e-worship"/></svg><span>Targets: 0.75, 0.80</span></div>
        <div class="line"><svg class="emoji"><use href="#e-heart"/></svg><span>: 0.6881</span></div>
        <div class="meta"><span>13:28</span><svg class="check"><use href="#i-check"/></svg></div>
      </article>

      <article class="bubble bubble-reply bubble-next">
        <div class="reply">
          <div class="reply-name">You</div>
        </div>
      </article>
    </section>

    <button class="scroll-down" type="button" aria-label="Scroll down">
      <svg width="36" height="34" viewBox="0 0 36 34"><path d="M2 2 18 15 34 2M2 18 18 31 34 18" fill="none" stroke="#a5a9ab" stroke-width="4"/></svg>
    </button>

    <footer class="composer">
      <div class="input">
        <svg class="smiley" width="60" height="60" viewBox="0 0 60 60"><circle cx="30" cy="30" r="30" fill="#a3a8ab"/><ellipse cx="20" cy="22" rx="4.500" ry="6.500" fill="#2f383e"/><ellipse cx="40" cy="22" rx="4.500" ry="6.500" fill="#2f383e"/><path d="M9 33C17 37 43 37 51 33 50 46 40 53 30 53S10 46 9 33Z" fill="#2f383e"/><path d="M15 38C22 40 38 40 45 38 42 44 36 46 30 46S18 44 15 38Z" fill="#a3a8ab"/></svg>
        <span class="placeholder">Type a message</span>
        <svg class="clip" width="62" height="58" viewBox="0 0 62 58"><path d="M53 54 18 22C13 17 7 15 4 9 2 4 8 1 13 3 18 5 22 10 26 14L54 40C60 46 60 51 56 55 52 58 46 56 42 53L17 29C14 26 14 23 17 21 19 19 22 20 25 23L45 41" fill="none" stroke="#a3a8ab" stroke-width="4.500" stroke-linecap="round" stroke-linejoin="round"/></svg>
        <svg class="camera" width="59" height="55" viewBox="0 0 59 55"><path d="M6 10H15L20 2Q21 0 24 0H35Q38 0 39 2L44 10H53Q59 10 59 16V49Q59 55 53 55H6Q0 55 0 49V16Q0 10 6 10Z" fill="#a3a8ab"/><circle cx="29.500" cy="30" r="13" fill="none" stroke="#2f383e" stroke-width="5"/></svg>
      </div>
      <button class="mic" type="button" aria-label="Record voice message">
        <svg width="46" height="62" viewBox="0 0 46 62"><rect x="13" y="0" width="20" height="38" rx="10" fill="#fff"/><path d="M3 25V29C3 39 12 46 23 46S43 39 43 29V25" fill="none" stroke="#fff" stroke-width="5" stroke-linecap="round"/><path d="M23 46V60" stroke="#fff" stroke-width="5" stroke-linecap="round"/></svg>
      </button>
    </footer>
  </main>

  <nav class="navbar">
    <svg width="42" height="42" viewBox="0 0 42 42"><rect x="2" y="2" width="38" height="38" rx="7" fill="none" stroke="#fff" stroke-width="3.500"/></svg>
    <svg width="48" height="48" viewBox="0 0 48 48"><circle cx="24" cy="24" r="22" fill="none" stroke="#fff" stroke-width="3.500"/></svg>
    <svg width="42" height="46" viewBox="0 0 42 46"><path d="M38 3Q40 2 40 5V41Q40 44 37 43L3 25Q1 23 3 21Z" fill="none" stroke="#fff" stroke-width="3.500" stroke-linejoin="round"/></svg>
  </nav>
</div>
</body>
</html>
```

FILE: styles.css
```css
* { box-sizing: border-box; }

html, body {
  margin: 0;
  padding: 0;
  background: #000;
}

body {
  font-family: Roboto, "Liberation Sans", sans-serif;
  -webkit-font-smoothing: antialiased;
}

.defs { position: absolute; }

.phone {
  width: 1080px;
  height: 1920px;
  display: flex;
  flex-direction: column;
  overflow: hidden;
}

/* Status bar */
.statusbar {
  height: 72px;
  flex: none;
  background: #0c151b;
  display: flex;
  align-items: center;
  justify-content: space-between;
  padding: 0 16px 0 19px;
}

.status-left, .status-right {
  display: flex;
  align-items: center;
}

.st-dots { fill: #fff; margin-right: 12px; }
.st-icon { margin-right: 12px; }
.st-chat { margin-right: 10px; }
.st-brand { margin-right: 10px; }
.st-image { margin-right: 14px; }
.st-b {
  font: italic 700 30px "Liberation Serif", serif;
  fill: #fff;
}

.st-text {
  font-size: 28.5px;
  line-height: 36px;
  color: #d0d3d5;
}

.st-bell { margin-left: 19px; }
.st-signal { margin-left: 11px; margin-top: -2px; overflow: visible; }
.st-4g { font: 500 15px Roboto, sans-serif; fill: #fff; }
.st-bolt { margin-left: 11px; }

.battery {
  position: relative;
  width: 65px;
  height: 28px;
  margin-left: 16px;
  border: 3px solid #fff;
  border-radius: 7px;
  padding: 2px;
  display: flex;
  justify-content: flex-end;
}

.battery::before {
  content: "";
  position: absolute;
  left: -9px;
  top: 6px;
  width: 5px;
  height: 10px;
  background: #fff;
  border-radius: 5px 0 0 5px;
}

.battery-level { width: 5px; background: #37d44f; }
.st-pct { margin-left: 6px; }
.st-time { margin-left: 14px; }

/* App bar */
.appbar {
  height: 168px;
  flex: none;
  background: #222e35;
  display: flex;
  align-items: center;
  padding-left: 25px;
}

.back { flex: none; }

.avatar {
  flex: none;
  width: 104px;
  height: 104px;
  margin-left: 12px;
  border-radius: 50%;
  background: #fff;
  overflow: hidden;
}

.logo-text { font: 500 4px Roboto, sans-serif; fill: #444; }

.title-block {
  flex: none;
  width: 601px;
  margin-left: 25px;
  align-self: flex-start;
  padding-top: 26px;
}

.title {
  font-size: 53.7px;
  font-weight: 500;
  line-height: 60px;
  color: #dcdfe0;
  white-space: nowrap;
}

.subtitle {
  font-size: 38.7px;
  line-height: 62px;
  color: #e3e6e7;
  white-space: nowrap;
}

.add-call { flex: none; margin-left: 47px; }
.menu { flex: none; margin-left: 90px; fill: #fff; }

/* Chat */
.chat {
  position: relative;
  flex: 1;
  min-height: 0;
  display: flex;
  flex-direction: column;
  background: #06171f;
  overflow: hidden;
}

.wall {
  position: absolute;
  left: 0;
  top: 0;
}

.wall * {
  fill: none;
  stroke: #1e2e33;
  stroke-width: 2.6px;
  stroke-linecap: round;
  stroke-linejoin: round;
  vector-effect: non-scaling-stroke;
}

.messages {
  position: relative;
  flex: none;
  height: 1402px;
  overflow: hidden;
  display: flex;
  flex-direction: column;
  align-items: flex-end;
  gap: 8px;
  padding-right: 48px;
}

.bubble {
  position: relative;
  flex: none;
  background: #06463f;
  border-radius: 38px;
  color: #d6dddd;
  font-size: 36px;
  line-height: 51px;
  letter-spacing: -0.35px;
  display: flex;
  flex-direction: column;
  gap: 51px;
}

.bubble-cut {
  width: 664px;
  border-radius: 0 0 38px 38px;
  padding: 40px 32px 26px 31px;
}

.bubble-ata {
  width: 559px;
  padding: 22px 31px 26px;
}

.line {
  display: flex;
  align-items: center;
  gap: 5px;
  height: 51px;
}

.emoji {
  flex: none;
  width: 48px;
  height: 48px;
  overflow: visible;
}

.meta {
  position: absolute;
  right: 42px;
  bottom: 10px;
  display: flex;
  align-items: center;
  gap: 10px;
  font-size: 31px;
  line-height: 36px;
  letter-spacing: 0;
  color: #9db3b0;
}

.check {
  width: 34px;
  height: 30px;
  color: #9db3b0;
  margin-top: -6px;
}

.bubble-reply {
  display: block;
  padding: 12px 12px 0;
}

.bubble-tp {
  width: 531px;
  height: 305px;
}

.reply {
  position: relative;
  height: 200px;
  background: #033c36;
  border-radius: 24px;
  overflow: hidden;
  padding: 15px 0 0 36px;
  color: #90a7a4;
  line-height: 42px;
}

.reply::before {
  content: "";
  position: absolute;
  left: 0;
  top: 0;
  bottom: 0;
  width: 12px;
  background: #029583;
}

.reply-name {
  font-size: 31px;
  font-weight: 500;
  line-height: 40px;
  letter-spacing: 0;
  color: #02998a;
  margin-bottom: 6px;
}

.reply-line {
  display: flex;
  align-items: center;
  gap: 5px;
  height: 42px;
}

.reply-gap { margin-top: 41px; }

.emoji-sm {
  flex: none;
  width: 40px;
  height: 40px;
}

.reply-text {
  display: flex;
  align-items: center;
  gap: 4px;
  margin: 15px 0 0 18px;
  height: 51px;
}

.emoji-fire {
  flex: none;
  width: 42px;
  height: 48px;
  margin-top: -4px;
}

.bubble-next {
  width: 449px;
  height: 200px;
  border-radius: 38px 38px 0 0;
}

.scroll-down {
  position: absolute;
  left: 948px;
  top: 1258px;
  width: 96px;
  height: 96px;
  padding: 0;
  border: 0;
  border-radius: 50%;
  background: #2f383e;
  display: flex;
  align-items: center;
  justify-content: center;
}

/* Composer */
.composer {
  position: relative;
  flex: 1;
  display: flex;
  align-items: flex-start;
  gap: 14px;
  padding: 12px 14px 0;
}

.input {
  flex: none;
  width: 898px;
  height: 138px;
  border-radius: 69px;
  background: #2f383e;
  display: flex;
  align-items: center;
  padding-left: 34px;
}

.smiley { flex: none; }

.placeholder {
  margin-left: 36px;
  width: 531px;
  flex: none;
  font-size: 46px;
  color: #8a9197;
  white-space: nowrap;
}

.clip { flex: none; margin-top: 6px; }
.camera { flex: none; margin-left: 72px; margin-top: -2px; }

.mic {
  flex: none;
  width: 141px;
  height: 141px;
  margin-top: -2px;
  padding: 0;
  border: 0;
  border-radius: 50%;
  background: #04ae9c;
  display: flex;
  align-items: center;
  justify-content: center;
}

/* Navigation bar */
.navbar {
  height: 114px;
  flex: none;
  background: #000;
  display: flex;
  align-items: center;
  padding-left: 219px;
  gap: 255px;
}
```
